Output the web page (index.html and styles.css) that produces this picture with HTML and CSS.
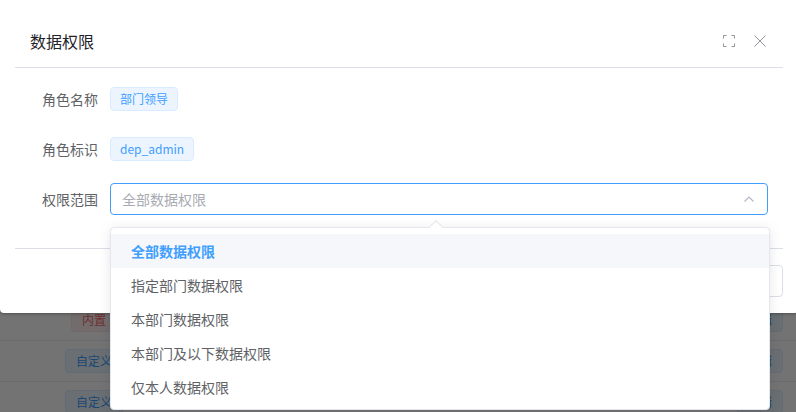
FILE: index.html
```html
<!DOCTYPE html>
<html lang="zh">
<head>
<meta charset="utf-8">
<title>数据权限</title>
<link rel="stylesheet" href="styles.css">
</head>
<body>
<div class="table">
  <div class="row first"><span class="cat red">内置</span><span class="cat blue">编辑</span></div>
  <div class="row"><span class="cat blue">自定义</span><span class="cat blue">编辑</span></div>
  <div class="row"><span class="cat blue">自定义</span><span class="cat blue">编辑</span></div>
</div>
<div class="mask"></div>
<section class="dialog">
  <header class="head">
    <h2 class="title">数据权限</h2>
    <div class="tools">
      <svg class="icon" viewBox="0 0 14 14" fill="none" stroke="#909399" stroke-width="1"><path d="M1.5 4.5v-3h3M9.5 1.5h3v3M12.5 9.5v3h-3M4.5 12.5h-3v-3"/></svg>
      <svg class="icon" viewBox="0 0 14 14" fill="none" stroke="#909399" stroke-width="1"><path d="M1.5 1.5l11 11M12.5 1.5l-11 11"/></svg>
    </div>
  </header>
  <div class="body">
    <div class="field"><label class="lab">角色名称</label><span class="tag">部门领导</span></div>
    <div class="field"><label class="lab">角色标识</label><span class="tag">dep_admin</span></div>
    <div class="field"><label class="lab">权限范围</label>
      <div class="select"><span>全部数据权限</span>
        <svg class="chev" viewBox="0 0 10 6" fill="none" stroke="#b4b8c0" stroke-width="1.2"><path d="M.5 5.5L5 1l4.5 4.5"/></svg>
      </div>
    </div>
  </div>
  <footer class="foot"><span class="btn"></span></footer>
</section>
<div class="drop">
  <i class="arrow"></i>
  <ul class="list">
    <li class="opt on">全部数据权限</li>
    <li class="opt">指定部门数据权限</li>
    <li class="opt">本部门数据权限</li>
    <li class="opt">本部门及以下数据权限</li>
    <li class="opt">仅本人数据权限</li>
  </ul>
</div>
</body>
</html>
```
FILE: styles.css
```css
* { box-sizing: border-box; }
html, body { margin: 0; height: 412px; overflow: hidden; }
body { position: relative; background: #fff; font-family: "Noto Sans CJK SC", "Noto Sans", sans-serif; font-size: 14px; color: #606266; }
.table { padding-top: 300px; }
.row { height: 41px; border-bottom: 1px solid #ebeef5; display: flex; align-items: center; justify-content: space-between; padding: 0 13px 0 65px; }
.cat { flex: none; height: 24px; line-height: 22px; padding: 0 10px; border-radius: 4px; font-size: 12px; border: 1px solid; white-space: nowrap; }
.red { margin-left: 6px; color: #f56c6c; background: #fef0f0; border-color: #fde2e2; }
.blue { color: #409eff; background: #ecf5ff; border-color: #d9ecff; }
.mask { position: absolute; inset: 0; background: rgba(0,0,0,.55); }
.dialog { position: absolute; left: 0; top: 0; width: 798px; height: 313px; background: #fff; border-radius: 0 0 4px 4px; box-shadow: 0 1px 3px rgba(0,0,0,.3); padding: 15px 15px 0; }
.head { height: 53px; border-bottom: 1px solid #dcdfe6; display: flex; align-items: center; justify-content: space-between; width: 768px; padding: 0 15px; }
.title { margin: 0; font-size: 16px; font-weight: 400; color: #1f2329; line-height: 24px; }
.tools { display: flex; gap: 17px; margin-right: 1px; }
.icon { width: 14px; height: 14px; display: block; }
.body { width: 768px; height: 181px; padding-top: 15px; border-bottom: 1px solid #dcdfe6; display: flex; flex-direction: column; gap: 18px; }
.field { height: 32px; display: flex; align-items: center; width: 753px; }
.lab { width: 95px; text-align: right; padding-right: 12px; flex: none; line-height: 32px; }
.tag { height: 24px; line-height: 22px; padding: 0 9px; font-size: 12px; color: #409eff; background: #ecf5ff; border: 1px solid #d9ecff; border-radius: 4px; }
.select { flex: 1; height: 32px; border: 1px solid #409eff; border-radius: 4px; display: flex; align-items: center; justify-content: space-between; padding: 0 13px 0 11px; color: #a8abb2; }
.chev { width: 10px; height: 6px; display: block; }
.foot { display: flex; justify-content: flex-end; width: 768px; padding-top: 16px; }
.btn { width: 98px; height: 32px; border: 1px solid #dcdfe6; border-radius: 4px; background: #fff; }
.drop { position: absolute; left: 110px; top: 227px; width: 660px; height: 183px; background: #fff; border: 1px solid #e4e7ed; border-radius: 4px; box-shadow: 0 2px 12px rgba(0,0,0,.1); }
.arrow { position: absolute; left: 320px; top: -6px; width: 10px; height: 10px; background: #fff; border: 1px solid #e4e7ed; border-right: 0; border-bottom: 0; transform: rotate(45deg); }
.list { position: relative; margin: 0; padding: 6px 0; list-style: none; }
.opt { height: 34px; line-height: 34px; padding: 0 20px; }
.opt.on { color: #409eff; font-weight: 700; background: #f5f7fa; }
```
